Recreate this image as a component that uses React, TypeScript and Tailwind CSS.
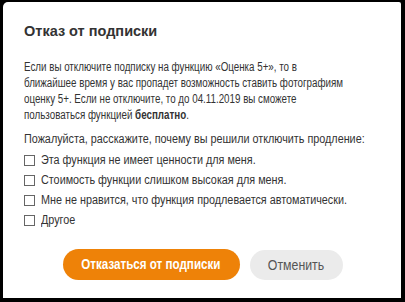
import React from "react";

const reasons = [
  "Эта функция не имеет ценности для меня.",
  "Стоимость функции слишком высокая для меня.",
  "Мне не нравится, что функция продлевается автоматически.",
  "Другое",
];

export default function App() {
  return (
    <div className="w-[405px] h-[302px] bg-black pl-[3px] pt-[2px] pr-[4px] pb-[4px]" style={{ fontFamily: '"Liberation Sans", Arial, sans-serif' }}>
      <div className="w-full h-full overflow-hidden bg-white rounded-tl-[5px] rounded-tr-[2px] px-[21px] pt-[19px] text-[#333]">
        <h1 className="text-[14.5px] font-bold leading-[20px] text-[#333]">Отказ от подписки</h1>
        <p className="mt-[18px] text-[12px] leading-[16px] whitespace-nowrap origin-left scale-x-[0.815]">
          Если вы отключите подписку на функцию «Оценка 5+», то в<br />
          ближайшее время у вас пропадет возможность ставить фотографиям<br />
          оценку 5+. Если не отключите, то до 04.11.2019 вы сможете<br />
          пользоваться функцией <b>бесплатно</b>.
        </p>
        <p className="mt-[8px] text-[12px] leading-[16px] whitespace-nowrap origin-left scale-x-[0.9]">
          Пожалуйста, расскажите, почему вы решили отключить продление:
        </p>
        <div className="mt-[3px] flex flex-col">
          {reasons.map((r) => (
            <label key={r} className="flex items-center h-[20px] text-[12px]">
              <span className="w-[11px] h-[11px] border border-[#666] bg-white mr-[6px] shrink-0" />
              <span className="inline-block whitespace-nowrap origin-left scale-x-[0.9]">{r}</span>
            </label>
          ))}
        </div>
        <div className="mt-[19px] flex justify-center gap-[10px] pl-[1px]">
          <button className="h-[31px] w-[177px] rounded-full bg-[#ee8208] text-white text-[14px] font-bold flex items-center justify-center">
            <span className="inline-block whitespace-nowrap scale-x-[0.83]">Отказаться от подписки</span>
          </button>
          <button className="h-[30px] mt-[1px] w-[93px] rounded-full bg-[#ebebeb] text-[#555] text-[14px] flex items-center justify-center">
            <span className="inline-block whitespace-nowrap scale-x-[0.88]">Отменить</span>
          </button>
        </div>
      </div>
    </div>
  );
}
